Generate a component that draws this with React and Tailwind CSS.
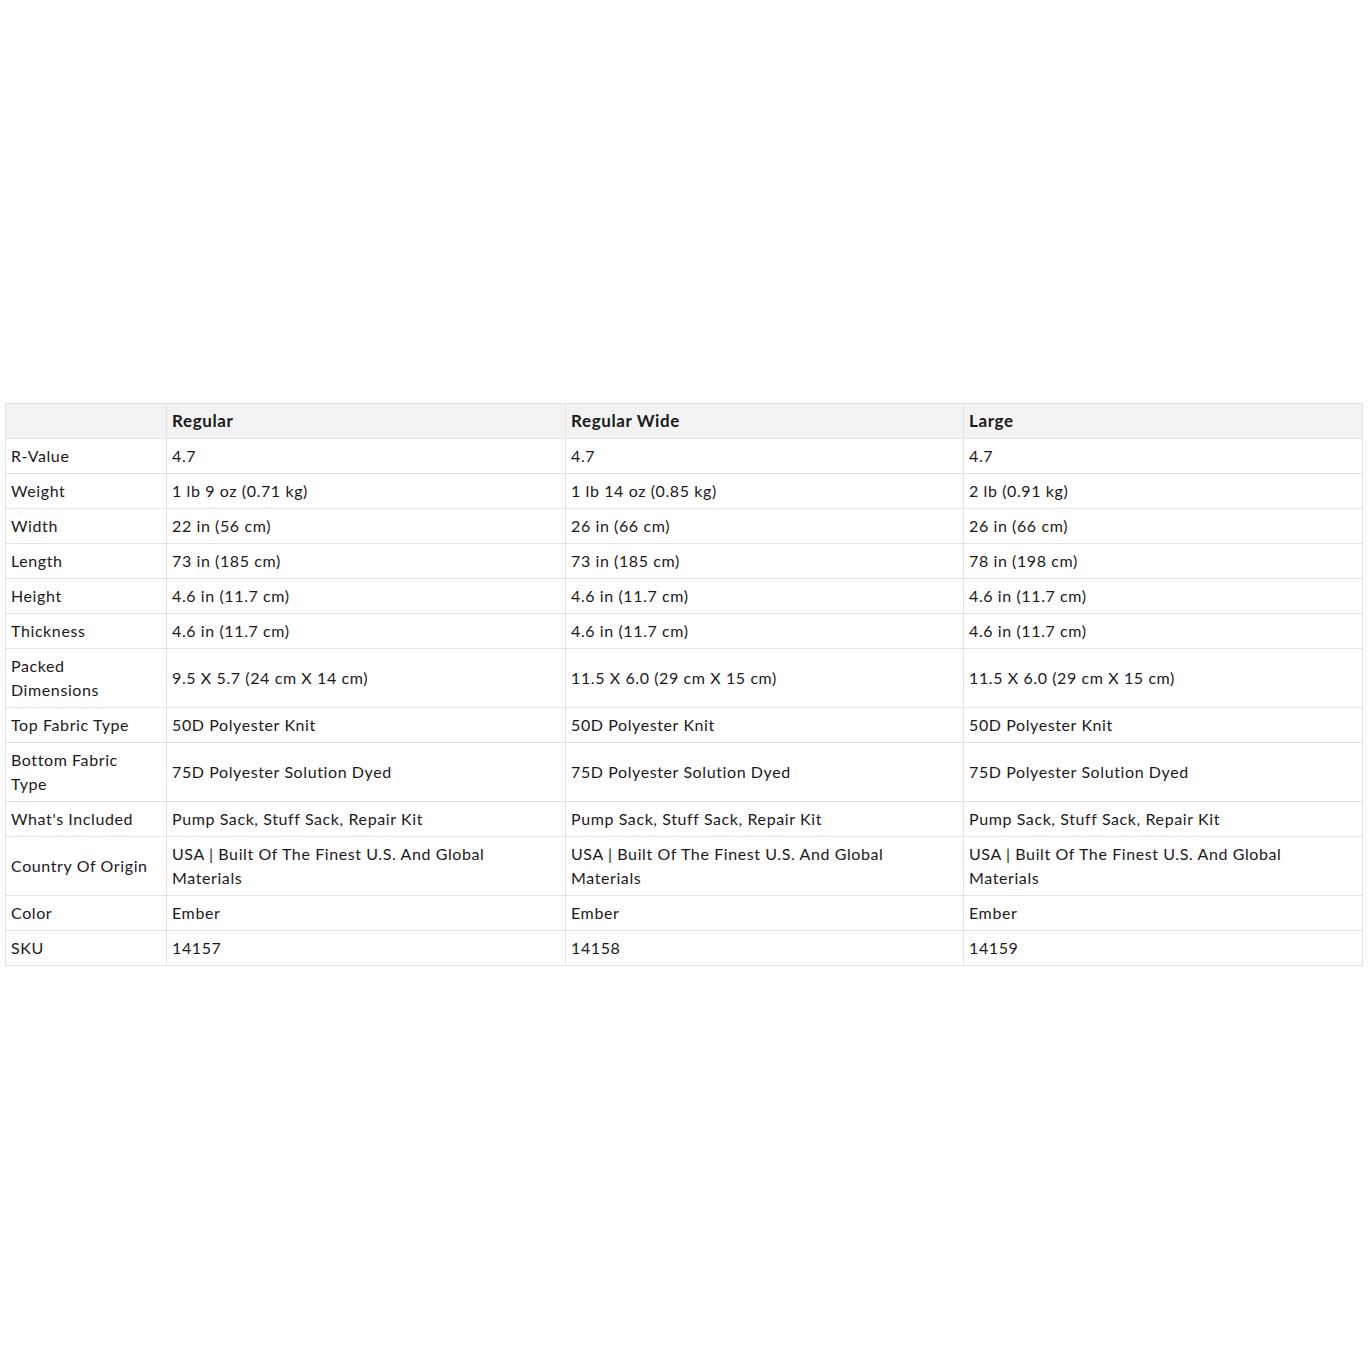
import React from "react";

const columns = ["Regular", "Regular Wide", "Large"];

const rows = [
  ["R-Value", "4.7", "4.7", "4.7"],
  ["Weight", "1 lb 9 oz (0.71 kg)", "1 lb 14 oz (0.85 kg)", "2 lb (0.91 kg)"],
  ["Width", "22 in (56 cm)", "26 in (66 cm)", "26 in (66 cm)"],
  ["Length", "73 in (185 cm)", "73 in (185 cm)", "78 in (198 cm)"],
  ["Height", "4.6 in (11.7 cm)", "4.6 in (11.7 cm)", "4.6 in (11.7 cm)"],
  ["Thickness", "4.6 in (11.7 cm)", "4.6 in (11.7 cm)", "4.6 in (11.7 cm)"],
  ["Packed Dimensions", "9.5 X 5.7 (24 cm X 14 cm)", "11.5 X 6.0 (29 cm X 15 cm)", "11.5 X 6.0 (29 cm X 15 cm)"],
  ["Top Fabric Type", "50D Polyester Knit", "50D Polyester Knit", "50D Polyester Knit"],
  ["Bottom Fabric Type", "75D Polyester Solution Dyed", "75D Polyester Solution Dyed", "75D Polyester Solution Dyed"],
  ["What's Included", "Pump Sack, Stuff Sack, Repair Kit", "Pump Sack, Stuff Sack, Repair Kit", "Pump Sack, Stuff Sack, Repair Kit"],
  [
    "Country Of Origin",
    "USA | Built Of The Finest U.S. And Global Materials",
    "USA | Built Of The Finest U.S. And Global Materials",
    "USA | Built Of The Finest U.S. And Global Materials",
  ],
  ["Color", "Ember", "Ember", "Ember"],
  ["SKU", "14157", "14158", "14159"],
];

const cell = "border border-[#e3e3e3] px-[5px] py-[5px] text-left align-middle";

export default function App() {
  return (
    <div className="min-h-screen flex items-center bg-white font-['Lato',sans-serif] text-[16px] leading-6 tracking-[0.6px] text-[#1a1a1a]">
      <table className="ml-[5px] -mt-px w-[1357px] table-fixed border-collapse">
        <colgroup>
          <col className="w-[161px]" />
          <col className="w-[399px]" />
          <col className="w-[398px]" />
          <col className="w-[399px]" />
        </colgroup>
        <thead>
          <tr className="bg-[#f3f3f3]">
            <th className={cell}></th>
            {columns.map((c) => (
              <th key={c} className={cell + " font-bold text-[17px]"}>
                {c}
              </th>
            ))}
          </tr>
        </thead>
        <tbody>
          {rows.map((r) => (
            <tr key={r[0]}>
              {r.map((v, i) => (
                <td key={i} className={cell}>
                  <div className={i === 0 ? "max-w-[143px]" : "max-w-[360px]"}>{v}</div>
                </td>
              ))}
            </tr>
          ))}
        </tbody>
      </table>
    </div>
  );
}
